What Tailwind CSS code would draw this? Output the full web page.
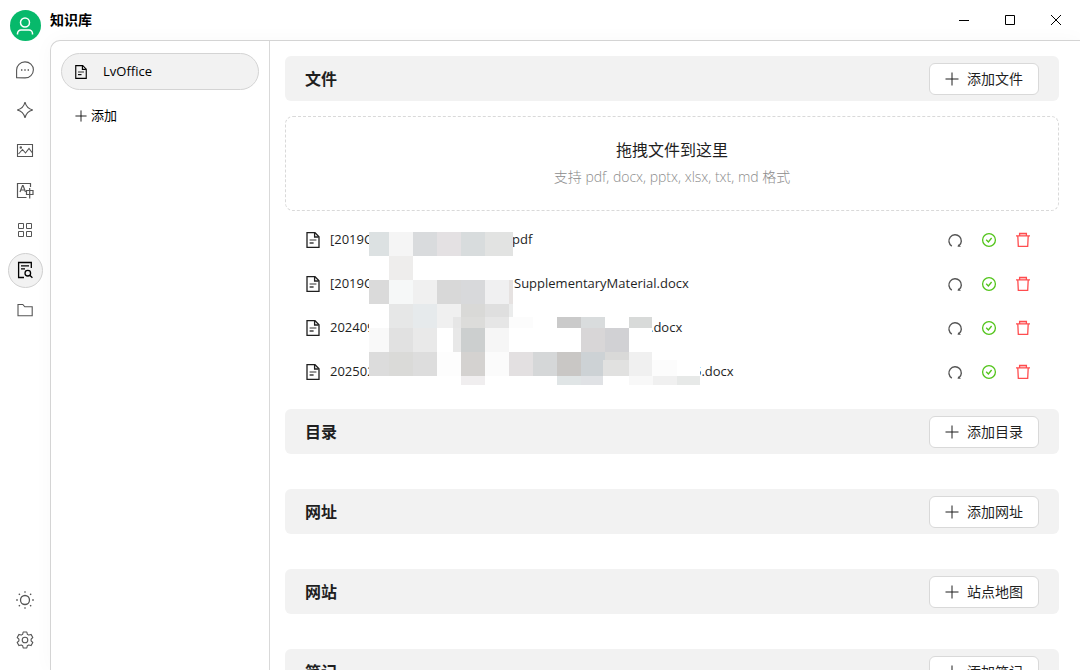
<!DOCTYPE html>
<html lang="zh-CN">
<head>
  <meta charset="UTF-8" />
  <meta name="viewport" content="width=device-width, initial-scale=1" />
  <title>知识库</title>
  <script src="https://cdn.jsdelivr.net/npm/@tailwindcss/browser@4"></script>
</head>
<body class="bg-white text-black text-[13px] font-['Open_Sans','Noto_Sans_CJK_SC',sans-serif]">
  <!-- shared icons -->
  <svg class="hidden">
    <symbol id="doc" viewBox="0 0 16 16" fill="none" stroke="currentColor" stroke-width="1.3">
      <path d="M2 .7h8l4 4v10.6H2z" />
      <path d="M9.6 1v4h4" />
      <path d="M4.6 8h6.8" stroke-opacity=".7" />
      <path d="M4.6 11h4" />
    </symbol>
    <symbol id="plus" viewBox="0 0 14 14" fill="none" stroke="currentColor">
      <path d="M7 .5v13M.5 7h13" />
    </symbol>
    <symbol id="redo" viewBox="0 0 16 16" fill="none" stroke="currentColor" stroke-width="1.4">
      <path d="M4.8 14.2A6.2 6.2 0 1 1 12 13.8" />
      <path d="M11.2 12.2l2.8 2.6h-3.400z" fill="currentColor" stroke="none" />
    </symbol>
    <symbol id="check" viewBox="0 0 16 16" fill="none" stroke="currentColor" stroke-width="1.3">
      <circle cx="8" cy="8" r="6.4" />
      <path d="M5.2 7.8l2.200 2.200 3.200-4" />
    </symbol>
    <symbol id="trash" viewBox="0 0 16 16" fill="none" stroke="currentColor" stroke-width="1.3">
      <path d="M2.800 4l.5 10.300h9.400L13.200 4" />
      <path d="M1 3.800h14M4.600 3.800V1.400h6.800v2.400" />
      <path d="M5 2.600h6" stroke-opacity=".4" />
    </symbol>
  </svg>

  <div class="flex h-screen overflow-hidden">
    <nav class="w-[50px] shrink-0 flex flex-col items-center pt-[10px] pb-[10px] text-[#555]">
      <button class="size-[31px] mb-[9px] rounded-full bg-[#07b96b] text-white flex items-center justify-center" aria-label="用户">
        <svg class="size-[18px]" viewBox="0 0 18 18" fill="none" stroke="currentColor" stroke-width="1.5">
          <circle cx="9" cy="5.5" r="4.5" />
          <path d="M1.5 17.5v-1a3.5 3.5 0 0 1 3.500-3.500h8a3.500 3.500 0 0 1 3.500 3.500v1" />
        </svg>
      </button>
      <button class="size-10 flex items-center justify-center" aria-label="聊天">
        <svg class="size-5" viewBox="0 0 20 20" fill="none" stroke="currentColor" stroke-width="1.1">
          <path d="M1.600 17.600V10a8.400 8 0 1 1 8.400 7.900z" />
          <path d="M6 10h1.400M9.300 10h1.400M12.600 10h1.400" stroke-width="1.300" />
        </svg>
      </button>
      <button class="size-10 flex items-center justify-center" aria-label="智能体">
        <svg class="size-5" viewBox="0 0 20 20" fill="none" stroke="currentColor" stroke-width="1.1">
          <path d="M10 2.200C11 6.500 13.500 9 17.800 10 13.500 11 11 13.500 10 17.800 9 13.500 6.500 11 2.200 10 6.500 9 9 6.500 10 2.200z" />
        </svg>
      </button>
      <button class="size-10 flex items-center justify-center" aria-label="绘画">
        <svg class="size-5" viewBox="0 0 20 20" fill="none" stroke="currentColor" stroke-width="1.1">
          <path d="M2.500 4.500h15v12h-15zM3.500 14l4-4.500 3 3.500 3.500-4.500 3 4" />
          <circle cx="5.800" cy="7.600" r=".7" />
        </svg>
      </button>
      <button class="size-10 flex items-center justify-center" aria-label="翻译">
        <svg class="size-5" viewBox="0 0 20 20" fill="none" stroke="currentColor" stroke-width="1.2">
          <path d="M15.500 7V3.500h-13v14h9" />
          <path d="M5 12l2.500-6.500h.6L10.500 12M6 10h3.600" />
          <path d="M11.500 10.500h6.500v4h-6.500zM14.700 8v10.500" />
        </svg>
      </button>
      <button class="size-10 flex items-center justify-center" aria-label="小程序">
        <svg class="size-5" viewBox="0 0 20 20" fill="none" stroke="currentColor">
          <path d="M3.500 3.500h5v5h-5zM11.500 3.500h5v5h-5zM3.500 11.500h5v5h-5zM11.500 11.500h5v5h-5z" />
        </svg>
      </button>
      <div class="size-10 flex items-center justify-center">
        <button class="size-[35px] rounded-full border border-[#d0d0d0] bg-[#f2f2f2] text-black flex items-center justify-center" aria-label="知识库">
          <svg class="size-5" viewBox="0 0 20 20" fill="none" stroke="currentColor" stroke-width="1.300">
            <path d="M16.300 8V2.500H3.600v15h5.400M6 5.800h8M6 8.800h4" />
            <circle cx="12.800" cy="13.200" r="2.800" />
            <path d="M14.800 15.200l2.600 2.600" />
          </svg>
        </button>
      </div>
      <button class="size-10 flex items-center justify-center" aria-label="文件">
        <svg class="size-5" viewBox="0 0 20 20" fill="none" stroke="currentColor" stroke-width="1.1">
          <path d="M3 15.800V4.500h4.800l2 2.300H17.200v9z" />
        </svg>
      </button>
      <div class="flex-1"></div>
      <button class="size-10 flex items-center justify-center" aria-label="主题">
        <svg class="size-5" viewBox="0 0 20 20" fill="none" stroke="currentColor" stroke-width="1.300">
          <circle cx="10" cy="10" r="4.500" />
          <path d="M10 1.200v1.600M10 17.200v1.600M1.200 10h1.600M17.200 10h1.600M3.800 3.800l1.100 1.100M15.100 15.100l1.100 1.100M3.800 16.200l1.100-1.100M15.100 4.900l1.100-1.100" />
        </svg>
      </button>
      <button class="size-10 flex items-center justify-center" aria-label="设置">
        <svg class="size-5" viewBox="0 0 20 20" fill="none" stroke="currentColor" stroke-width="1.1">
          <path d="M8.200 2h3.600l.5 2.200 1.500.9 2.200-.7 1.800 3.100-1.700 1.600v1.800l1.700 1.600-1.800 3.100-2.200-.7-1.500.9-.5 2.200H8.200l-.5-2.200-1.500-.9-2.200.7-1.800-3.100 1.700-1.600V9.100L2.200 7.500 4 4.400l2.200.7 1.500-.9z" stroke-linejoin="round" />
          <circle cx="10" cy="10" r="2.800" />
        </svg>
      </button>
    </nav>

    <div class="flex-1 min-w-0 flex flex-col">
      <header class="h-10 shrink-0 flex items-center justify-between">
        <h1 class="text-sm font-bold">知识库</h1>
        <div class="flex items-center pr-px">
          <button class="w-[46px] h-10 flex items-center justify-center" aria-label="最小化">
            <svg class="size-[10px]" viewBox="0 0 10 10" stroke="currentColor"><path d="M0 5.500h10" /></svg>
          </button>
          <button class="w-[46px] h-10 flex items-center justify-center" aria-label="最大化">
            <svg class="size-[10px]" viewBox="0 0 10 10" fill="none" stroke="currentColor"><path d="M.5 .5h9v9H.5z" /></svg>
          </button>
          <button class="w-[46px] h-10 flex items-center justify-center" aria-label="关闭">
            <svg class="size-[10px]" viewBox="0 0 10 10" stroke="currentColor"><path d="M0 0l10 10M10 0l-10 10" /></svg>
          </button>
        </div>
      </header>

      <div class="flex-1 min-h-0 flex bg-white border-t border-l border-[#d4d4d4] rounded-tl-[10px] shadow-[0_0_20px_rgba(0,0,0,0.03)]">
        <aside class="w-[219px] shrink-0 border-r border-[#d9d9d9] px-[10px] pt-3">
          <button class="w-full h-[37px] flex items-center gap-[15px] px-3 rounded-full border border-[#d4d4d4] bg-[#f2f2f2]">
            <svg class="size-[14px]"><use href="#doc" /></svg>
            LvOffice
          </button>
          <button class="h-[52px] flex items-center gap-1 px-[14px]">
            <svg class="size-3"><use href="#plus" /></svg>
            添加
          </button>
        </aside>

        <main class="flex-1 min-w-0 overflow-hidden pl-[15px] pr-[21px] pt-[15px] text-[#1f1f1f]">
          <section>
            <div class="h-[45px] flex items-center justify-between px-5 rounded-md bg-[#f2f2f2]">
              <h2 class="text-base font-bold">文件</h2>
              <button class="h-8 px-[15px] flex items-center gap-2 rounded-md border border-[#d9d9d9] bg-white text-sm">
                <svg class="size-[14px]"><use href="#plus" /></svg>添加文件
              </button>
            </div>

            <div class="h-[95px] mt-[15px] flex flex-col items-center justify-center rounded-lg border border-dashed border-[#d9d9d9]">
              <p class="text-base leading-[26px]">拖拽文件到这里</p>
              <p class="text-sm leading-7 font-light text-[#8c8c8c]">支持 pdf, docx, pptx, xlsx, txt, md 格式</p>
            </div>

            <div class="relative mt-[7px] mb-[15px]">
              <ul>
                <li class="h-11 flex items-center pl-5 pr-7">
                  <svg class="size-4 mr-[9px]"><use href="#doc" /></svg>
                  <span class="w-[182px] shrink-0">[2019C</span>
                  <span class="flex-1">pdf</span>
                  <div class="flex items-center gap-[18px]">
                    <button class="text-[#555]" aria-label="刷新"><svg class="size-4"><use href="#redo" /></svg></button>
                    <svg class="size-4 text-[#52c41a]"><use href="#check" /></svg>
                    <button class="text-[#ff4d4f]" aria-label="删除"><svg class="size-4"><use href="#trash" /></svg></button>
                  </div>
                </li>
                <li class="h-11 flex items-center pl-5 pr-7">
                  <svg class="size-4 mr-[9px]"><use href="#doc" /></svg>
                  <span class="w-[184px] shrink-0">[2019C</span>
                  <span class="flex-1">SupplementaryMaterial.docx</span>
                  <div class="flex items-center gap-[18px]">
                    <button class="text-[#555]" aria-label="刷新"><svg class="size-4"><use href="#redo" /></svg></button>
                    <svg class="size-4 text-[#52c41a]"><use href="#check" /></svg>
                    <button class="text-[#ff4d4f]" aria-label="删除"><svg class="size-4"><use href="#trash" /></svg></button>
                  </div>
                </li>
                <li class="h-11 flex items-center pl-5 pr-7">
                  <svg class="size-4 mr-[9px]"><use href="#doc" /></svg>
                  <span class="w-[320px] shrink-0">202409</span>
                  <span class="flex-1">.docx</span>
                  <div class="flex items-center gap-[18px]">
                    <button class="text-[#555]" aria-label="刷新"><svg class="size-4"><use href="#redo" /></svg></button>
                    <svg class="size-4 text-[#52c41a]"><use href="#check" /></svg>
                    <button class="text-[#ff4d4f]" aria-label="删除"><svg class="size-4"><use href="#trash" /></svg></button>
                  </div>
                </li>
                <li class="h-11 flex items-center pl-5 pr-7">
                  <svg class="size-4 mr-[9px]"><use href="#doc" /></svg>
                  <span class="w-[364px] shrink-0">202502</span>
                  <span class="flex-1">5.docx</span>
                  <div class="flex items-center gap-[18px]">
                    <button class="text-[#555]" aria-label="刷新"><svg class="size-4"><use href="#redo" /></svg></button>
                    <svg class="size-4 text-[#52c41a]"><use href="#check" /></svg>
                    <button class="text-[#ff4d4f]" aria-label="删除"><svg class="size-4"><use href="#trash" /></svg></button>
                  </div>
                </li>
              </ul>

              <!-- mosaic over the private part of the names -->
              <svg class="absolute left-[84px] top-[14px] w-[331px] h-[153px]" viewBox="369 232 331 153" shape-rendering="crispEdges" aria-hidden="true">
                <path fill="#fff" d="M369 232h144v85h139v43h48v25H369z" />
                <path fill="#dce1e2" d="M369 232h20v24h-20z" />
                <path fill="#f5f5f5" d="M389 232h24v24h-24z" />
                <path fill="#d9dbdd" d="M413 232h24v24h-24z" />
                <path fill="#e4e1e3" d="M437 232h24v24h-24z" />
                <path fill="#d8dcdd" d="M461 232h24v24h-24z" />
                <path fill="#e2e3e2" d="M485 232h28v24h-28z" />
                <path fill="#eeedec" d="M389 256h24v24h-24z" />
                <path fill="#dadada" d="M369 280h20v24h-20z" />
                <path fill="#f6f8f8" d="M389 280h24v24h-24z" />
                <path fill="#f0f0f0" d="M413 280h24v24h-24z" />
                <path fill="#d8d8d8" d="M437 280h24v24h-24z" />
                <path fill="#d8d9db" d="M461 280h24v24h-24z" />
                <path fill="#f0f0f1" d="M485 280h24v24h-24z" />
                <path fill="#e6e2e1" d="M509 280h4v24h-4z" />
                <path fill="#e6e7e7" d="M389 304h24v24h-24z" />
                <path fill="#e6eaec" d="M413 304h24v24h-24z" />
                <path fill="#f0f0f0" d="M437 304h24v24h-24z" />
                <path fill="#d9d9d7" d="M461 304h24v13h-24z" />
                <path fill="#dfdfdf" d="M485 304h24v13h-24z" />
                <path fill="#ebecec" d="M509 304h4v13h-4z" />
                <path fill="#e6e6e6" d="M453 317h56v11h-56z" />
                <path fill="#dcdcda" d="M461 317h24v11h-24z" />
                <path fill="#fcfcfc" d="M509 317h24v11h-24z" />
                <path fill="#cacaca" d="M557 317h24v11h-24z" />
                <path fill="#d9dcdd" d="M581 317h24v11h-24z" />
                <path fill="#d8dad9" d="M629 317h23v11h-23z" />
                <path fill="#f9f9f9" d="M369 328h20v24h-20z" />
                <path fill="#e1e1e1" d="M389 328h24v24h-24z" />
                <path fill="#e9e9e9" d="M413 328h24v24h-24z" />
                <path fill="#e8e8e8" d="M453 328h8v24h-8z" />
                <path fill="#cccfcf" d="M461 328h24v24h-24z" />
                <path fill="#f6f6f6" d="M485 328h24v24h-24z" />
                <path fill="#d8d6d7" d="M581 328h24v24h-24z" />
                <path fill="#d1d1d4" d="M605 328h24v24h-24z" />
                <path fill="#dcdcdc" d="M369 352h20v24h-20z" />
                <path fill="#dadad8" d="M389 352h24v24h-24z" />
                <path fill="#dddddd" d="M413 352h24v24h-24z" />
                <path fill="#fdfdfd" d="M437 352h24v24h-24z" />
                <path fill="#d4d2d0" d="M461 352h24v24h-24z" />
                <path fill="#fbfbfb" d="M485 352h24v24h-24z" />
                <path fill="#e3e0e1" d="M509 352h24v24h-24z" />
                <path fill="#d5d7d8" d="M533 352h24v24h-24z" />
                <path fill="#c9c7c5" d="M557 352h24v24h-24z" />
                <path fill="#cdd2d5" d="M581 352h24v24h-24z" />
                <path fill="#d9d9d8" d="M605 352h24v8h-24z" />
                <path fill="#e1e1e0" d="M603 360h26v16h-26z" />
                <path fill="#f0f0f0" d="M629 352h23v24h-23z" />
                <path fill="#fcfcfc" d="M652 360h25v16h-25z" />
                <path fill="#f0eeef" d="M461 376h24v9h-24z" />
                <path fill="#e0e5e6" d="M557 376h24v9h-24z" />
                <path fill="#e0e2e5" d="M581 376h22v9h-22z" />
                <path fill="#f8f8f8" d="M629 376h24v9h-24z" />
                <path fill="#f0f0f0" d="M653 376h24v9h-24z" />
                <path fill="#e7e9e8" d="M677 376h23v9h-23z" />
              </svg>
            </div>
          </section>

          <section class="mb-[35px]">
            <div class="h-[45px] flex items-center justify-between px-5 rounded-md bg-[#f2f2f2]">
              <h2 class="text-base font-bold">目录</h2>
              <button class="h-8 px-[15px] flex items-center gap-2 rounded-md border border-[#d9d9d9] bg-white text-sm">
                <svg class="size-[14px]"><use href="#plus" /></svg>添加目录
              </button>
            </div>
          </section>

          <section class="mb-[35px]">
            <div class="h-[45px] flex items-center justify-between px-5 rounded-md bg-[#f2f2f2]">
              <h2 class="text-base font-bold">网址</h2>
              <button class="h-8 px-[15px] flex items-center gap-2 rounded-md border border-[#d9d9d9] bg-white text-sm">
                <svg class="size-[14px]"><use href="#plus" /></svg>添加网址
              </button>
            </div>
          </section>

          <section class="mb-[35px]">
            <div class="h-[45px] flex items-center justify-between px-5 rounded-md bg-[#f2f2f2]">
              <h2 class="text-base font-bold">网站</h2>
              <button class="h-8 px-[15px] flex items-center gap-2 rounded-md border border-[#d9d9d9] bg-white text-sm">
                <svg class="size-[14px]"><use href="#plus" /></svg>站点地图
              </button>
            </div>
          </section>

          <section class="mb-[35px]">
            <div class="h-[45px] flex items-center justify-between px-5 rounded-md bg-[#f2f2f2]">
              <h2 class="text-base font-bold">笔记</h2>
              <button class="h-8 px-[15px] flex items-center gap-2 rounded-md border border-[#d9d9d9] bg-white text-sm">
                <svg class="size-[14px]"><use href="#plus" /></svg>添加笔记
              </button>
            </div>
          </section>
        </main>
      </div>
    </div>
  </div>
</body>
</html>
